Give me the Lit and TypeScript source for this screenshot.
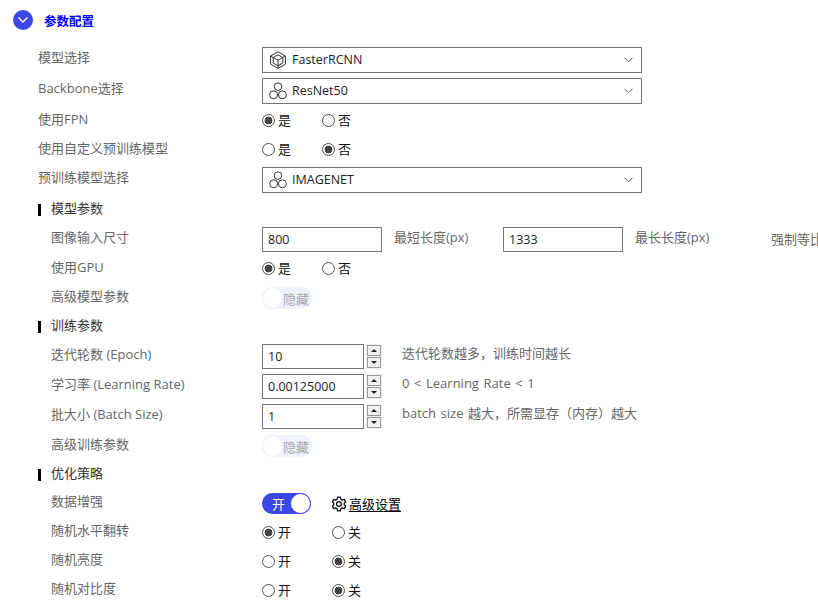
import { LitElement, html, css, svg } from "lit";
import { customElement } from "lit/decorators.js";

const cube = svg`<g fill="none" stroke="#333" stroke-width="1" stroke-linejoin="round"><path d="M9 .8 16.4 5V13.2L9 17.4 1.6 13.2V5Z"/><path d="M9 3.8 13.8 6.5 9 9.2 4.2 6.5ZM4.2 6.5V12L9 14.8 13.8 12V6.5M9 9.2V17.4M1.6 5 4.2 6.5M16.4 5 13.8 6.5"/></g>`;
const hex = svg`<g fill="none" stroke="#333" stroke-width="1"><circle cx="9" cy="4.6" r="3.8"/><circle cx="4.6" cy="12.8" r="4"/><circle cx="13.4" cy="12.8" r="4"/></g>`;

@customElement("app-root")
export class AppRoot extends LitElement {
  static styles = css`
    :host { display: block; width: 818px; height: 609px; overflow: hidden; background: #fff;
      font-family: "Open Sans", "Noto Sans CJK SC", sans-serif; font-size: 13px; color: #666; }
    .head { display: flex; align-items: center; gap: 11px; padding: 10px 0 0 13px; height: 20px; }
    .circle { width: 20px; height: 20px; border-radius: 50%; background: #3d46e6; display: flex; align-items: center; justify-content: center; }
    .title { color: #0000ff; font-weight: 700; font-size: 12.5px; font-family: "Noto Sans CJK SC", sans-serif; }
    .form { padding-top: 17px; }
    .row { display: flex; align-items: center; height: 22px; padding-left: 38px; }
    .row.sub { padding-left: 51px; }
    .row.tall { height: 26px; }
    .row.h25 { height: 25px; }
    .row.h21 { height: 21px; }
    .m4 { margin-top: 4px; } .m5 { margin-top: 5px; } .m6 { margin-top: 6px; }
    .m7 { margin-top: 7px; } .m8 { margin-top: 8px; } .m9 { margin-top: 9px; }
    .label { width: 224px; flex: none; line-height: 18px; margin-bottom: 5px; white-space: nowrap; }
    .tall .label { margin-bottom: 6px; }
    .lo .label { margin-bottom: 3px; }
    .sub .label { width: 211px; }
    .sec { display: flex; align-items: center; height: 22px; padding-left: 38px; color: #333; }
    .sec span { margin-bottom: 2px; }
    .bar { width: 3px; height: 12px; background: #000; margin: 4px 10px 0 0; }
    .sel { width: 380px; height: 26px; box-sizing: border-box; border: 1px solid #767676; display: flex; align-items: center; padding: 0 8px 0 6px; color: #222; font-size: 12.5px; flex: none; }
    .sel svg.ic { margin-right: 5px; flex: none; }
    .sel span { flex: 1; margin-top: -1px; }
    .radios { display: flex; align-items: center; color: #111; }
    .radio { display: flex; align-items: center; gap: 3px; }
    .radio span { margin-bottom: 2px; }
    .w60 { width: 60px; } .w70 { width: 70px; }
    input[type="radio"] { appearance: none; margin: 0; width: 13px; height: 13px; border: 1px solid #4f4f4f; border-radius: 50%; background: #fff; box-sizing: border-box; flex: none; }
    input[type="radio"]:checked { background: radial-gradient(circle, #444 0 3.6px, #fff 4.2px); }
    .box { height: 25px; box-sizing: border-box; border: 1px solid #767676; padding: 0 5px 1px; display: flex; align-items: center; color: #222; font-size: 12.5px; flex: none; }
    .w120 { width: 120px; } .w102 { width: 102px; }
    .hint { white-space: nowrap; flex: none; }
    .hint.a { margin: 0 0 7px 12px; width: 109px; }
    .hint.b { margin: 0 0 7px 12px; width: 124px; }
    .hint.c { margin: 0 0 2px 12px; }
    .hint.d { margin: 0 0 8px 20px; word-spacing: 1.2px; }
    .spin { width: 16px; height: 25px; margin-left: 2px; background: #efefef; display: flex; flex-direction: column; justify-content: center; gap: 1px; flex: none; }
    .spin div { height: 11px; margin: 0 1px; border: 1px solid #9a9a9a; box-sizing: border-box; background: #f0f0f0; display: flex; align-items: center; justify-content: center; }
    .up { width: 0; height: 0; border: 3px solid transparent; border-top: 0; border-bottom: 3px solid #222; }
    .down { width: 0; height: 0; border: 3px solid transparent; border-bottom: 0; border-top: 3px solid #222; }
    .off { width: 50px; height: 22px; border-radius: 11px; background: #eef0fa; display: flex; align-items: center; color: #aaa; }
    .off i { width: 21px; height: 22px; border-radius: 50%; background: #fff; border: 1px solid #eef0fa; box-sizing: border-box; flex: none; }
    .on { width: 49px; height: 21px; border-radius: 11px; background: #3d46e6; display: flex; align-items: center; justify-content: space-between; color: #fff; padding-left: 10px; box-sizing: border-box; }
    .on i { width: 21px; height: 21px; border-radius: 50%; background: #fff; border: 1px solid #3d46e6; box-sizing: border-box; }
    .adv { display: flex; align-items: center; margin-left: 20px; color: #000; gap: 2px; }
    .adv u { text-underline-offset: 2px; margin-bottom: 1px; }
  `;

  sel(icon: unknown, text: string) {
    return html`<div class="sel"><svg class="ic" width="18" height="18" viewBox="0 0 18 18">${icon}</svg><span>${text}</span>
      <svg width="9" height="6" viewBox="0 0 9 6"><path d="M.5.8 4.5 4.8 8.5.8" fill="none" stroke="#555" stroke-width="1"/></svg></div>`;
  }

  radios(a: string, b: string, first: boolean, w: string) {
    return html`<div class="radios">
      <label class="radio ${w}"><input type="radio" .checked=${first} /><span>${a}</span></label>
      <label class="radio"><input type="radio" .checked=${!first} /><span>${b}</span></label></div>`;
  }

  num(v: string, hint: string) {
    return html`<div class="box w102">${v}</div>
      <div class="spin"><div><span class="up"></span></div><div><span class="down"></span></div></div>
      <div class="hint d">${hint}</div>`;
  }

  render() {
    return html`
      <div class="head">
        <div class="circle"><svg width="12" height="8" viewBox="0 0 12 8"><path d="M1.5 1.5 6 6 10.5 1.5" fill="none" stroke="#fff" stroke-width="1.4"/></svg></div>
        <div class="title">参数配置</div>
      </div>
      <div class="form">
        <div class="row tall"><div class="label">模型选择</div>${this.sel(cube, "FasterRCNN")}</div>
        <div class="row tall m5"><div class="label">Backbone选择</div>${this.sel(hex, "ResNet50")}</div>
        <div class="row lo m5"><div class="label">使用FPN</div>${this.radios("是", "否", true, "w60")}</div>
        <div class="row lo m7"><div class="label">使用自定义预训练模型</div>${this.radios("是", "否", false, "w60")}</div>
        <div class="row tall m7"><div class="label">预训练模型选择</div>${this.sel(hex, "IMAGENET")}</div>
        <div class="sec m4"><div class="bar"></div><span>模型参数</span></div>
        <div class="row sub h25 m8"><div class="label">图像输入尺寸</div>
          <div class="box w120">800</div><div class="hint a">最短长度(px)</div>
          <div class="box w120">1333</div><div class="hint b">最长长度(px)</div>
          <div class="hint c">强制等比</div></div>
        <div class="row sub lo m5"><div class="label">使用GPU</div>${this.radios("是", "否", true, "w60")}</div>
        <div class="row sub m8"><div class="label">高级模型参数</div><div class="off"><i></i>隐藏</div></div>
        <div class="sec m5"><div class="bar"></div><span>训练参数</span></div>
        <div class="row sub h25 m8"><div class="label">迭代轮数 (Epoch)</div>${this.num("10", "迭代轮数越多，训练时间越长")}</div>
        <div class="row sub h25 m5"><div class="label">学习率 (Learning Rate)</div>${this.num("0.00125000", "0 < Learning Rate < 1")}</div>
        <div class="row sub h25 m5"><div class="label">批大小 (Batch Size)</div>${this.num("1", "batch size 越大，所需显存（内存）越大")}</div>
        <div class="row sub m6"><div class="label">高级训练参数</div><div class="off"><i></i>隐藏</div></div>
        <div class="sec m5"><div class="bar"></div><span>优化策略</span></div>
        <div class="row sub h21 m9"><div class="label">数据增强</div>
          <div class="on">开<i></i></div>
          <div class="adv"><svg width="16" height="16" viewBox="0 0 16 16"><path d="M6.6 1.2h2.8l.4 2 1.5.9 2-.7 1.4 2.4-1.5 1.4v1.6l1.5 1.4-1.4 2.4-2-.7-1.5.9-.4 2H6.6l-.4-2-1.5-.9-2 .7-1.4-2.4 1.5-1.4V7.2L1.3 5.8l1.4-2.4 2 .7 1.5-.9Z" fill="none" stroke="#111" stroke-width="1.3" stroke-linejoin="round"/><circle cx="8" cy="8" r="2.4" fill="none" stroke="#111" stroke-width="1.3"/></svg><u>高级设置</u></div></div>
        <div class="row sub m7"><div class="label">随机水平翻转</div>${this.radios("开", "关", true, "w70")}</div>
        <div class="row sub m7"><div class="label">随机亮度</div>${this.radios("开", "关", false, "w70")}</div>
        <div class="row sub m7"><div class="label">随机对比度</div>${this.radios("开", "关", false, "w70")}</div>
      </div>`;
  }
}
